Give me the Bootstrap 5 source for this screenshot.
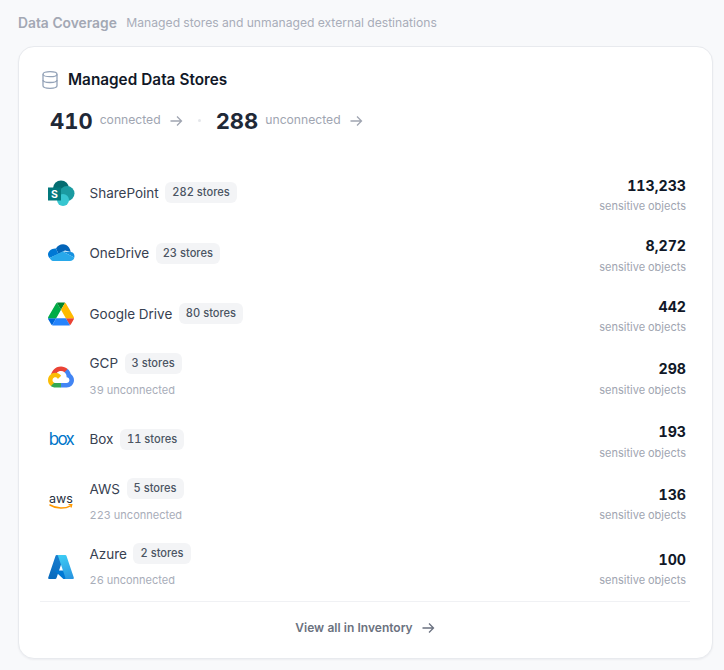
<!DOCTYPE html>
<html lang="en">
<head>
<meta charset="utf-8">
<title>Data Coverage</title>
<link href="https://cdn.jsdelivr.net/npm/bootstrap@5.3.0/dist/css/bootstrap.min.css" rel="stylesheet">
<style>
html,body{height:100%}
body{background:#f8f9fb;font-family:Inter,"Liberation Sans",sans-serif;color:#111827;overflow:hidden;font-variant-numeric:tabular-nums}
.page-wrap{padding:14px 11px 0 18px}
.sec-title{font-size:13.8px;font-weight:600;color:#a3a8b4;line-height:18px}
.sec-sub{font-size:12.15px;color:#a8adb9;line-height:18px;margin-left:9.5px}
.cover-card{margin-top:14px;border:1px solid #e8eaee;border-radius:16px;padding:22px 22px 0 21px;height:613px;box-shadow:0 1px 2px rgba(16,24,40,.05)}
.card-head{font-size:15.3px;font-weight:600;line-height:22px;color:#111827;gap:10px;padding-left:2px}
.summary{margin-top:13.5px;padding-left:10px;height:32px}
.big-num{font-size:22px;font-weight:700;color:#1f2937;line-height:32px}
.sum-label{font-size:12.15px;color:#a0a5b1;margin-left:7px}
.sum-dot{width:3px;height:3px;border-radius:50%;background:#e5e7eb;margin:0 14.5px 0 15.5px}
.store-list{margin-top:26px}
.store-row{padding:7px 4px 7px 7px}
.store-icon{width:28px;height:28px;margin-right:14.5px;flex:none}
.store-name{font-size:13.5px;color:#374151;line-height:22px}
.store-badge{font-size:11.1px;font-weight:500;color:#4b5563;background:#f3f4f6;border-radius:6px;padding:2px 7px;line-height:17px;margin-left:6.500px}
.store-two{padding:1px 0 4.5px}
.store-sub{font-size:11px;color:#a8adb9;line-height:16px;margin-top:7.5px}
.store-right{padding-top:6px;text-align:right}
.store-num{font-size:14.2px;font-weight:700;color:#111827;line-height:20.5px}
.store-unit{font-size:11px;color:#a0a5b1;line-height:20px}
.card-foot{border-top:1px solid #f0f1f4;margin-top:1px;padding-top:17px;font-size:12px;font-weight:600;color:#6b7280;line-height:18px;gap:8px}
</style>
</head>
<body>
<div class="page-wrap">
  <div class="d-flex align-items-center"><span class="sec-title">Data Coverage</span><span class="sec-sub">Managed stores and unmanaged external destinations</span></div>
  <div class="card cover-card">
    <div class="d-flex align-items-center card-head">
      <svg width="16" height="18" viewBox="0 0 16 18" fill="none" stroke="#94a3b8" stroke-width="1.3"><ellipse cx="8" cy="3.2" rx="7" ry="2.5"/><path d="M1 3.2v11.6c0 1.4 3.1 2.5 7 2.5s7-1.1 7-2.5V3.2"/><path d="M1 9c0 1.4 3.1 2.5 7 2.5s7-1.1 7-2.5"/></svg>
      <span>Managed Data Stores</span>
    </div>
    <div class="d-flex align-items-center summary">
      <span class="big-num">410</span><span class="sum-label">connected</span>
      <svg class="ms-2" width="14" height="14" viewBox="0 0 14 14" fill="none" stroke="#a0a5b1" stroke-width="1.3"><path d="M1.5 7h11M8 2.5 12.5 7 8 11.5"/></svg>
      <span class="sum-dot"></span>
      <span class="big-num">288</span><span class="sum-label">unconnected</span>
      <svg class="ms-2" width="14" height="14" viewBox="0 0 14 14" fill="none" stroke="#a0a5b1" stroke-width="1.3"><path d="M1.5 7h11M8 2.5 12.5 7 8 11.5"/></svg>
    </div>
    <div class="store-list">
      <div class="d-flex align-items-center justify-content-between store-row">
        <div class="d-flex align-items-center">
          <svg class="store-icon" viewBox="0 0 28 28"><circle cx="14" cy="9.500" r="8" fill="#036c70"/><circle cx="20" cy="14.500" r="7.500" fill="#1a9ba1"/><circle cx="16" cy="21" r="6" fill="#37c6d0"/><rect x="1" y="8.500" width="13" height="13" fill="#03787c"/><text x="7.500" y="19" text-anchor="middle" font-family="Inter" font-size="10.500" font-weight="700" fill="#fff">S</text></svg>
          <span class="store-name">SharePoint</span><span class="store-badge">282 stores</span>
        </div>
        <div class="store-right"><div class="store-num">113,233</div><div class="store-unit">sensitive objects</div></div>
      </div>
      <div class="d-flex align-items-center justify-content-between store-row">
        <div class="d-flex align-items-center">
          <svg class="store-icon" viewBox="0 0 28 28"><path d="M9 9.500C11 5.500 18 3 22 8.500 23 10 23.500 11.500 23.700 13L18 11.500 11.500 15Z" fill="#0364b8"/><path d="M9 9.500C5 9 1 12 1 15.500 1 16.500 1.500 18 2.500 19L11.500 15Z" fill="#0078d4"/><path d="M15.500 12.500 23.700 13C26 13 28 15 27.300 18.500Z" fill="#1490df"/><path d="M2.500 19 15.500 12.500 27.300 18.500C27 20.500 25 22 23 22H6C4.500 22 3.500 20.500 2.500 19Z" fill="#28a8ea"/></svg>
          <span class="store-name">OneDrive</span><span class="store-badge">23 stores</span>
        </div>
        <div class="store-right"><div class="store-num">8,272</div><div class="store-unit">sensitive objects</div></div>
      </div>
      <div class="d-flex align-items-center justify-content-between store-row">
        <div class="d-flex align-items-center">
          <svg class="store-icon" viewBox="-3.400 -8 94 94"><path d="m6.6 66.85 3.85 6.65c.8 1.4 1.95 2.5 3.3 3.3l13.75-23.8h-27.5c0 1.55.4 3.1 1.2 4.5z" fill="#0066da"/><path d="m43.65 25-13.75-23.8c-1.35.8-2.5 1.9-3.3 3.3l-25.4 44a9.06 9.06 0 0 0 -1.2 4.5h27.5z" fill="#00ac47"/><path d="m73.55 76.8c1.35-.8 2.5-1.9 3.3-3.3l1.6-2.75 7.65-13.25c.8-1.4 1.2-2.95 1.2-4.5h-27.502l5.852 11.5z" fill="#ea4335"/><path d="m43.65 25 13.75-23.8c-1.35-.8-2.9-1.2-4.5-1.2h-18.5c-1.6 0-3.15.45-4.5 1.2z" fill="#00832d"/><path d="m59.8 53h-32.3l-13.75 23.8c1.35.8 2.9 1.2 4.5 1.2h50.8c1.6 0 3.15-.45 4.5-1.2z" fill="#2684fc"/><path d="m73.4 26.5-12.7-22c-.8-1.4-1.95-2.5-3.3-3.3l-13.75 23.8 16.15 28h27.45c0-1.55-.4-3.1-1.2-4.5z" fill="#ffba00"/></svg>
          <span class="store-name">Google Drive</span><span class="store-badge">80 stores</span>
        </div>
        <div class="store-right"><div class="store-num">442</div><div class="store-unit">sensitive objects</div></div>
      </div>
      <div class="d-flex align-items-center justify-content-between store-row">
        <div class="d-flex align-items-center">
          <svg class="store-icon" viewBox="-10 -35 276 276"><path fill="#EA4335" d="m170.252 56.819 22.253-22.253 1.483-9.37C153.437-11.677 88.976-7.496 52.42 33.92 42.267 45.423 34.734 59.764 30.717 74.573l7.97-1.123 44.505-7.34 3.436-3.513c19.797-21.742 53.27-24.667 76.128-6.168z"/><path fill="#4285F4" d="M224.205 73.918c-5.115-18.836-15.616-35.768-30.217-48.722l-31.232 31.232c13.188 10.776 20.701 27.01 20.379 44.037v5.544c15.351 0 27.797 12.445 27.797 27.796 0 15.352-12.446 27.485-27.797 27.485h-55.671l-5.466 5.934v33.34l5.466 5.231h55.671c39.93.311 72.552-31.494 72.863-71.424.188-24.203-11.745-46.893-31.793-60.453"/><path fill="#34A853" d="M71.87 205.796h55.593V161.29H71.87c-3.961-.001-7.797-.852-11.399-2.498l-7.887 2.42-22.409 22.253-1.952 7.574c12.567 9.489 27.9 14.825 43.647 14.757"/><path fill="#FBBC05" d="M71.87 61.425C31.94 61.664-.237 94.228.001 134.159c.134 22.298 10.547 43.288 28.222 56.88l32.248-32.247c-13.991-6.321-20.208-22.786-13.887-36.776 6.32-13.99 22.786-20.208 36.775-13.888 6.161 2.784 11.096 7.72 13.88 13.888l32.248-32.248c-13.72-17.936-35.04-28.42-57.617-28.343"/></svg>
          <div class="store-two"><div class="d-flex align-items-center"><span class="store-name">GCP</span><span class="store-badge">3 stores</span></div><div class="store-sub">39 unconnected</div></div>
        </div>
        <div class="store-right"><div class="store-num">298</div><div class="store-unit">sensitive objects</div></div>
      </div>
      <div class="d-flex align-items-center justify-content-between store-row">
        <div class="d-flex align-items-center">
          <svg class="store-icon" viewBox="0 0 28 28"><text x="14" y="19.500" text-anchor="middle" font-family="Inter" font-size="17" font-weight="400" letter-spacing="-1.700" fill="#0075c9">box</text></svg>
          <span class="store-name">Box</span><span class="store-badge">11 stores</span>
        </div>
        <div class="store-right"><div class="store-num">193</div><div class="store-unit">sensitive objects</div></div>
      </div>
      <div class="d-flex align-items-center justify-content-between store-row">
        <div class="d-flex align-items-center">
          <svg class="store-icon" viewBox="0 0 28 28"><text x="14" y="14.500" text-anchor="middle" font-family="Inter" font-size="12.500" font-weight="400" fill="#252f3e">aws</text><path d="M3 17c6.500 4 15 4 20.500.800" fill="none" stroke="#f90" stroke-width="1.500" stroke-linecap="round"/><path d="M21.500 16.500h3.300l-.8 3" fill="none" stroke="#f90" stroke-width="1.200"/></svg>
          <div class="store-two"><div class="d-flex align-items-center"><span class="store-name">AWS</span><span class="store-badge">5 stores</span></div><div class="store-sub">223 unconnected</div></div>
        </div>
        <div class="store-right"><div class="store-num">136</div><div class="store-unit">sensitive objects</div></div>
      </div>
      <div class="d-flex align-items-center justify-content-between store-row">
        <div class="d-flex align-items-center">
          <svg class="store-icon" viewBox="0 0 96 96"><defs><linearGradient id="azA" x1="46" y1="6" x2="12" y2="90" gradientUnits="userSpaceOnUse"><stop offset="0" stop-color="#1b7fd0"/><stop offset="1" stop-color="#0669bc"/></linearGradient><linearGradient id="azB" x1="60" y1="6" x2="88" y2="90" gradientUnits="userSpaceOnUse"><stop offset="0" stop-color="#3ccbf4"/><stop offset="1" stop-color="#2892df"/></linearGradient></defs><path d="M33.34 6.54h26.04l-27.03 80.1a4.15 4.15 0 0 1-3.94 2.81H8.15a4.14 4.14 0 0 1-3.93-5.47L29.4 9.35a4.15 4.15 0 0 1 3.94-2.81z" fill="url(#azA)"/><path d="M71.17 60.26H29.88a1.91 1.91 0 0 0-1.3 3.31l26.53 24.76a4.17 4.17 0 0 0 2.85 1.13h23.38z" fill="#0078d4"/><path d="M66.6 9.36a4.14 4.14 0 0 0-3.93-2.82H33.65a4.15 4.15 0 0 1 3.93 2.82l25.18 74.62a4.15 4.15 0 0 1-3.93 5.48h29.02a4.15 4.15 0 0 0 3.93-5.48z" fill="url(#azB)"/></svg>
          <div class="store-two"><div class="d-flex align-items-center"><span class="store-name">Azure</span><span class="store-badge">2 stores</span></div><div class="store-sub">26 unconnected</div></div>
        </div>
        <div class="store-right"><div class="store-num">100</div><div class="store-unit">sensitive objects</div></div>
      </div>
    </div>
    <div class="d-flex align-items-center justify-content-center card-foot">
      <span>View all in Inventory</span>
      <svg width="14" height="14" viewBox="0 0 14 14" fill="none" stroke="#6b7280" stroke-width="1.300"><path d="M1.500 7h11M8 2.500 12.500 7 8 11.500"/></svg>
    </div>
  </div>
</div>
<script src="https://cdn.jsdelivr.net/npm/bootstrap@5.3.0/dist/js/bootstrap.bundle.min.js"></script>
</body>
</html>
